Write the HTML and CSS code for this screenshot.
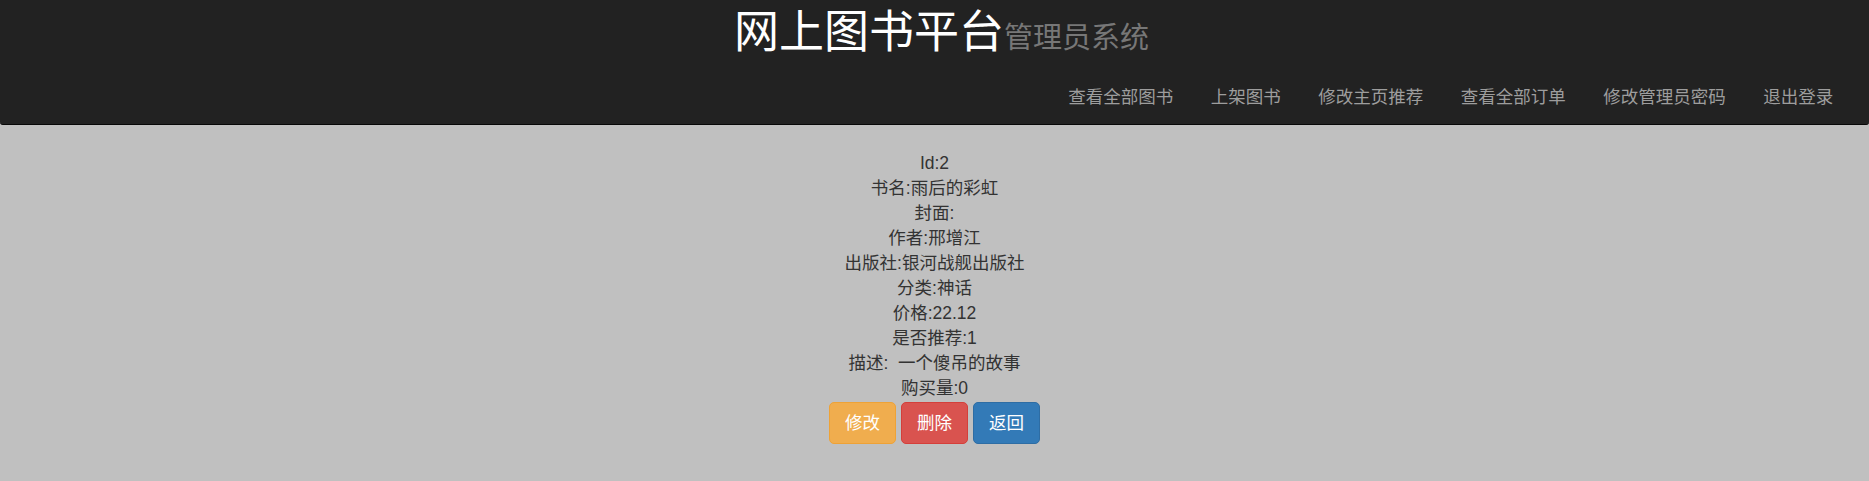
FILE: index.html
```html
<!DOCTYPE html>
<html lang="zh-CN">
<head>
<meta charset="utf-8">
<title>网上图书平台管理员系统</title>
<link rel="stylesheet" href="styles.css">
</head>
<body>
<nav class="navbar">
  <div class="brand">
    <h1 class="title">网上图书平台<small class="subtitle">管理员系统</small></h1>
  </div>
  <ul class="nav">
    <li><a href="#">查看全部图书</a></li>
    <li><a href="#">上架图书</a></li>
    <li><a href="#">修改主页推荐</a></li>
    <li><a href="#">查看全部订单</a></li>
    <li><a href="#">修改管理员密码</a></li>
    <li><a href="#">退出登录</a></li>
  </ul>
</nav>
<main class="detail">
  <div class="line">Id:2</div>
  <div class="line">书名:雨后的彩虹</div>
  <div class="line">封面:</div>
  <div class="line">作者:邢增江</div>
  <div class="line">出版社:银河战舰出版社</div>
  <div class="line">分类:神话</div>
  <div class="line">价格:22.12</div>
  <div class="line">是否推荐:1</div>
  <div class="line">描述:&nbsp;&nbsp;一个傻吊的故事</div>
  <div class="line">购买量:0</div>
  <div class="actions">
    <a href="#" class="btn btn-warning">修改</a>
    <a href="#" class="btn btn-danger">删除</a>
    <a href="#" class="btn btn-primary">返回</a>
  </div>
</main>
</body>
</html>
```
FILE: styles.css
```css
* { box-sizing: border-box; }
html, body { margin: 0; padding: 0; }
body {
  background: #c0c0c0;
  color: #333;
  font-family: "Liberation Sans", "Noto Sans CJK SC", sans-serif;
  font-size: 17.5px;
  line-height: 25px;
}
.navbar {
  background: #222;
  border-bottom: 1px solid #080808;
  border-radius: 0 0 3px 3px;
  height: 125px;
  display: flex;
  flex-direction: column;
}
.brand {
  display: flex;
  justify-content: center;
  padding-left: 14px;
  padding-top: 8px;
}
.title {
  margin: 0;
  font-weight: 400;
  font-size: 45px;
  line-height: 50px;
  color: #fff;
}
.subtitle {
  font-size: 29px;
  color: #777;
}
.nav {
  list-style: none;
  margin: 22px 0 0 0;
  padding: 0 17px 0 0;
  display: flex;
  justify-content: flex-end;
}
.nav a {
  display: block;
  padding: 0 18.75px;
  color: #9d9d9d;
  text-decoration: none;
  line-height: 25px;
}
.detail {
  padding-top: 26px;
  text-align: center;
}
.line { line-height: 25px; }
.actions {
  display: flex;
  justify-content: center;
  gap: 5px;
  margin-top: 1px;
}
.btn {
  display: inline-block;
  padding: 7.5px 15px;
  border: 1px solid transparent;
  border-radius: 5px;
  color: #fff;
  text-decoration: none;
  line-height: 25px;
}
.btn-warning { background: #f0ad4e; border-color: #eea236; }
.btn-danger { background: #d9534f; border-color: #d43f3a; }
.btn-primary { background: #337ab7; border-color: #2e6da4; }
```
